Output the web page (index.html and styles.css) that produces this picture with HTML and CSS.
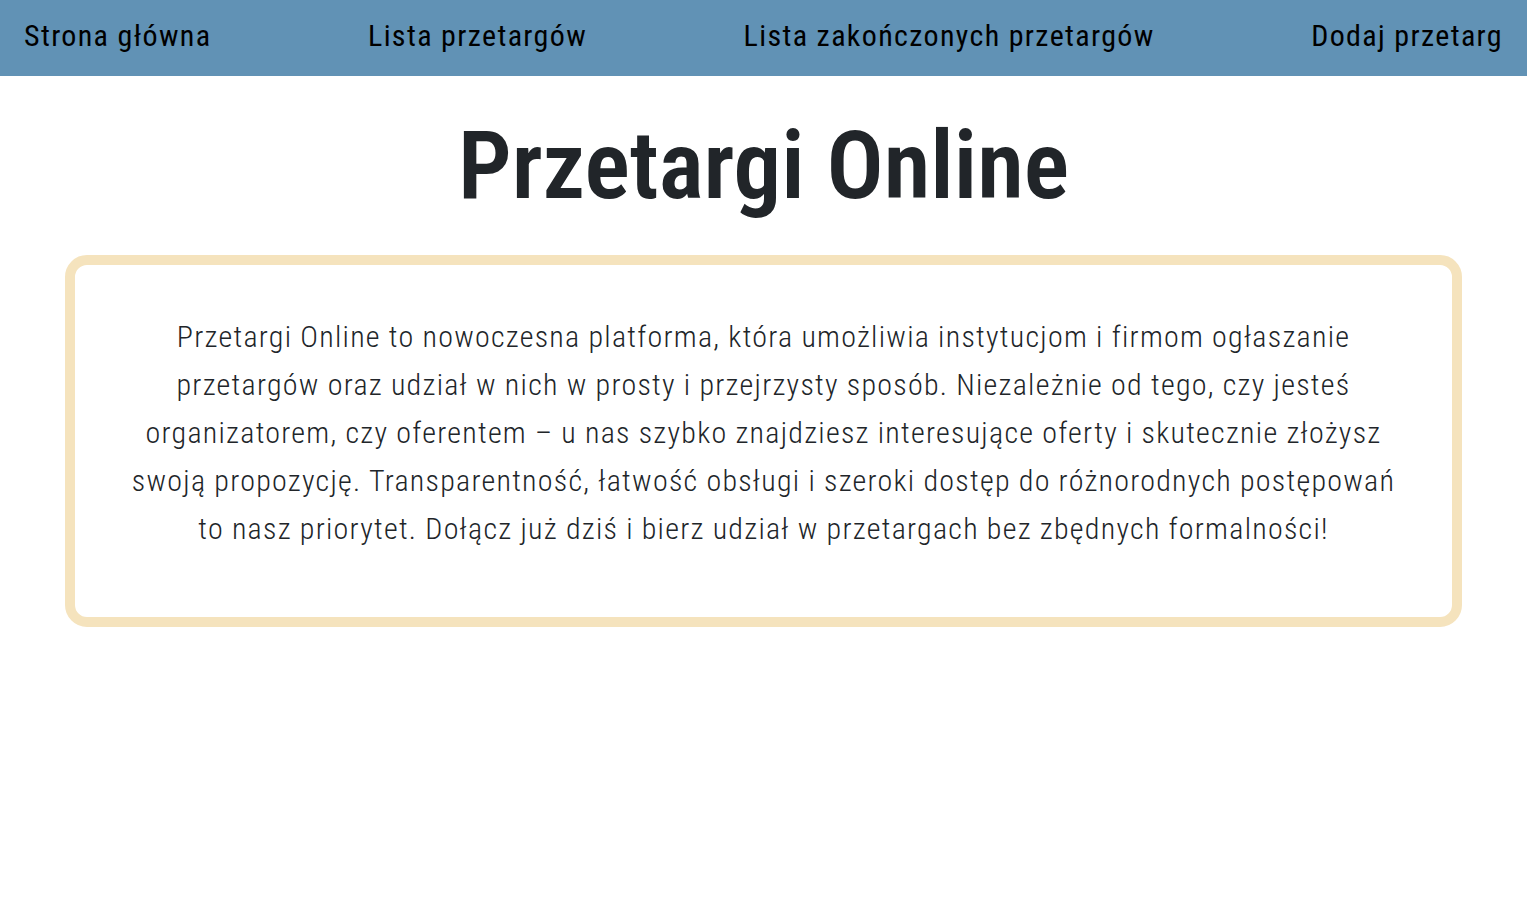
FILE: index.html
```html
<!DOCTYPE html>
<html lang="pl">
<head>
<meta charset="utf-8">
<title>Przetargi Online</title>
<link rel="stylesheet" href="styles.css">
</head>
<body>
<nav class="nav">
  <a class="nav-link" href="#">Strona główna</a>
  <a class="nav-link" href="#">Lista przetargów</a>
  <a class="nav-link" href="#">Lista zakończonych przetargów</a>
  <a class="nav-link" href="#">Dodaj przetarg</a>
</nav>
<main class="main">
  <h1 class="title">Przetargi Online</h1>
  <section class="card">
    <p class="card-text">Przetargi Online to nowoczesna platforma, która umożliwia instytucjom i firmom ogłaszanie przetargów oraz udział w nich w prosty i przejrzysty sposób. Niezależnie od tego, czy jesteś organizatorem, czy oferentem – u nas szybko znajdziesz interesujące oferty i skutecznie złożysz swoją propozycję. Transparentność, łatwość obsługi i szeroki dostęp do różnorodnych postępowań to nasz priorytet. Dołącz już dziś i bierz udział w przetargach bez zbędnych formalności!</p>
  </section>
</main>
</body>
</html>
```

FILE: styles.css
```css
* { box-sizing: border-box; }
html, body { margin: 0; padding: 0; background: #fff; }
body {
  font-family: Roboto, "Liberation Sans", sans-serif;
  color: #212529;
}
.nav {
  display: flex;
  justify-content: space-between;
  align-items: center;
  height: 76px;
  padding: 0 24px 5px;
  background: #6192b5;
}
.nav-link {
  color: #000;
  text-decoration: none;
  font-size: 30px;
  font-weight: 400;
  font-stretch: condensed;
  letter-spacing: 1.35px;
}
.main {
  display: flex;
  flex-direction: column;
  align-items: center;
}
.title {
  margin: 38px 0 36px;
  font-size: 95px;
  font-weight: 600;
  font-stretch: condensed;
  line-height: 1.1;
}
.card {
  align-self: stretch;
  margin: 0 65px;
  border: 10px solid #f5e3bd;
  border-radius: 22px;
  padding: 48px 50px 64px;
}
.card-text {
  margin: 0;
  text-align: center;
  font-size: 30px;
  font-stretch: condensed;
  letter-spacing: 1.25px;
  line-height: 48px;
  font-weight: 300;
}
```
